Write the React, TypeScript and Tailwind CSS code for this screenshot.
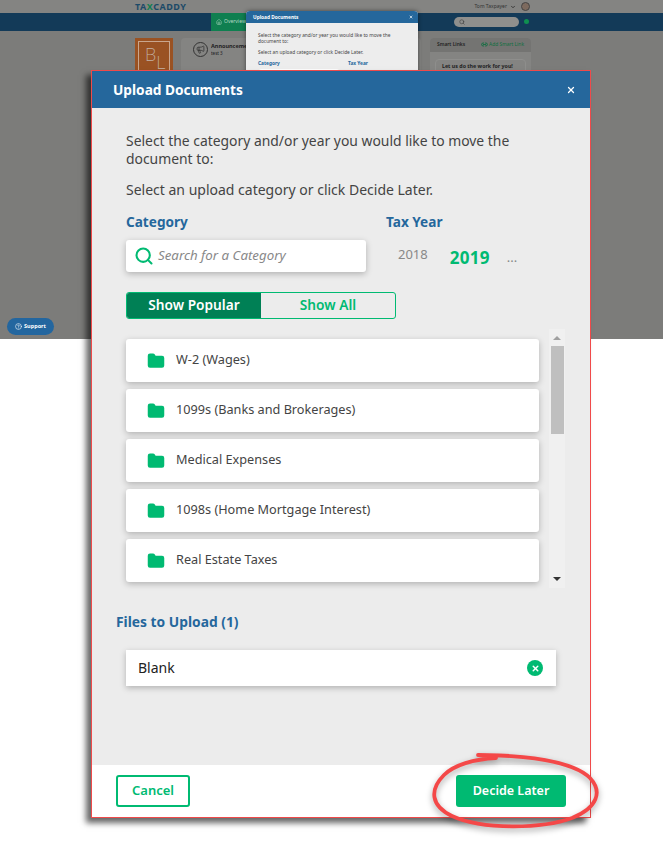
import { Search, Folder, X, Home, Megaphone, Link2, CircleHelp, ChevronDown } from "lucide-react"

const categories = [
  "W-2 (Wages)",
  "1099s (Banks and Brokerages)",
  "Medical Expenses",
  "1098s (Home Mortgage Interest)",
  "Real Estate Taxes",
]

const font = "font-['Noto_Sans','Open_Sans',sans-serif]"

function BackgroundApp() {
  return (
    <div className="relative h-[339px] w-full overflow-hidden bg-[#7c7c7a]">
      <div className="flex h-[13px] items-center justify-between bg-[#848482] pl-[135px] pr-[133px]">
        <span className="text-[9px] font-bold tracking-[0.5px] text-[#1c4a68]">
          TA<span className="text-[#0f7f50]">X</span>CADDY
        </span>
        <div className="flex items-center gap-[3px]">
          <span className="text-[5px] text-[#333]">Tom Taxpayer</span>
          <ChevronDown className="size-[6px] text-[#222]" strokeWidth={3} />
          <div className="ml-[2px] size-[9px] rounded-full border border-[#444] bg-[#7d6a5e]" />
        </div>
      </div>
      <div className="flex h-[18px] items-stretch bg-[#133a58] pl-[211px]">
        <div className="flex w-[35px] items-center gap-[2px] bg-[#0f7f50] pl-[5px] text-[5px] text-[#b5d8c5]">
          <Home className="size-[6px]" />
          Overview
        </div>
        <div className="ml-[208px] mt-1 flex h-[10px] w-[65px] items-center rounded-full bg-[#8f8f8d] pl-[5px]">
          <Search className="size-[6px] text-[#333]" />
        </div>
        <div className="ml-[5px] mt-[6px] size-[5px] rounded-full bg-[#0f8f50]" />
      </div>
      <div className="flex pl-[135px] pt-[7px]">
        <div className="h-[50px] w-[38px] shrink-0 bg-[#9a5223] p-[3px]">
          <div className="flex h-full border border-[#c9a68e] pl-[6px] pt-[3px] text-[18px] font-extralight leading-[18px] text-[#c4b2a6]">
            <span>B</span>
            <span className="mt-[8px]">L</span>
          </div>
        </div>
        <div className="ml-[8px] flex h-[60px] w-[240px] shrink-0 gap-[2px] rounded-sm bg-[#848482] pl-[12px] pt-[4px]">
          <div className="flex size-[15px] items-center justify-center rounded-full border border-[#333]">
            <Megaphone className="size-[9px] text-[#333]" />
          </div>
          <div className="ml-[1px] w-[36px] overflow-hidden whitespace-nowrap pt-[1px] text-[5.5px] font-bold leading-[7px] text-[#222]">
            Announcements
            <div className="text-[4.5px] font-normal">test 3</div>
          </div>
        </div>
        <div className="ml-[9px] h-[60px] w-[101px] shrink-0 rounded-sm bg-[#848482]">
          <div className="flex h-[14px] items-center justify-between rounded-t-sm bg-[#747472] pl-[7px] pr-[7px] text-[4.9px] text-[#222]">
            <span className="font-semibold">Smart Links</span>
            <span className="flex items-center gap-[1px] text-[#0f6f40]">
              <Link2 className="size-[7px]" strokeWidth={3} />
              Add Smart Link
            </span>
          </div>
          <div className="mx-[5px] mt-[7px] h-10 rounded-sm border border-[#8e8e8c] pl-[6px] pt-[3px] text-[5.3px] font-bold text-[#222]">
            Let us do the work for you!
          </div>
        </div>
      </div>
      <div className="absolute bottom-[4px] left-[7px] flex h-[17px] w-[47px] items-center justify-center gap-[2px] rounded-full bg-[#23669f] text-[5.5px] font-bold text-white">
        <CircleHelp className="size-[7px]" />
        Support
      </div>
      <div className="absolute left-[246px] top-[11px] h-[70px] w-[172px] overflow-hidden rounded-t-sm bg-[#ededed] text-[4.8px] leading-[6px] text-[#444] shadow-[0_0_4px_rgba(0,0,0,0.5)]">
        <div className="flex h-[12px] items-center justify-between bg-[#25679c] pl-[7px] pr-[5px] font-bold text-white">
          Upload Documents <X className="size-[4px]" strokeWidth={4} />
        </div>
        <div className="pl-[12px] pr-[20px] pt-[9px]">
          <p>Select the category and/or year you would like to move the document to:</p>
          <p className="mt-[5px]">Select an upload category or click Decide Later.</p>
          <div className="mt-[5px] flex font-bold text-[#25679c]">
            <span className="w-[90px]">Category</span>
            <span>Tax Year</span>
          </div>
          <div className="mt-[3px] h-[20px] w-[82px] rounded-sm bg-white" />
        </div>
      </div>
    </div>
  )
}

function CategoryRow({ name }: { name: string }) {
  return (
    <div className="flex h-[43px] shrink-0 items-center rounded-[3px] bg-white pl-[21px] shadow-[0_2px_6px_rgba(0,0,0,0.25)]">
      <Folder className="size-[18px] fill-[#00ba72] text-[#00ba72]" />
      <span className="-mt-[2px] ml-[11px] text-[12.7px] text-[#444]">{name}</span>
    </div>
  )
}

function UploadModal() {
  return (
    <div className="absolute left-[91px] top-[70px] flex h-[748px] w-[500px] flex-col border border-[#f04a4a] bg-[#ececec] shadow-[-5px_5px_6px_rgba(0,0,0,0.6)]">
      <div className="flex h-[37px] shrink-0 items-center justify-between bg-[#25679c] pl-[21px] pr-[14px] text-white">
        <h1 className="mt-[2px] text-[13.7px] font-bold">Upload Documents</h1>
        <X className="size-[10px]" strokeWidth={3} />
      </div>
      <div className="flex min-h-0 flex-1 flex-col pl-[34px]">
        <p className="mt-[24px] w-[400px] text-[13.9px] leading-[18px] text-[#444]">
          Select the category and/or year you would like to move the document to:
        </p>
        <p className="mt-[13px] text-[14px] leading-[18px] text-[#444]">
          Select an upload category or click Decide Later.
        </p>
        <div className="mt-[13px] flex">
          <div className="w-[260px]">
            <h2 className="text-[13.6px] font-bold leading-5 text-[#25679c]">Category</h2>
            <div className="mt-[8px] flex h-8 w-[240px] items-center rounded-[3px] bg-white pl-2 shadow-[0_2px_6px_rgba(0,0,0,0.25)]">
              <Search className="size-[20px] text-[#00ba72]" strokeWidth={2.5} />
              <span className="ml-[4px] text-[13.3px] italic text-[#888]">Search for a Category</span>
            </div>
          </div>
          <div>
            <h2 className="text-[13.6px] font-bold leading-5 text-[#25679c]">Tax Year</h2>
            <div className="mt-[8px] flex h-8 items-center pl-3">
              <span className="-mt-[3px] text-[13px] text-[#888]">2018</span>
              <span className="ml-[22px] mt-[3px] text-[17px] font-bold tracking-[0.3px] text-[#00ba72]">2019</span>
              <span className="ml-[17px] mt-[3px] text-[13px] text-[#888]">...</span>
            </div>
          </div>
        </div>
        <div className="mt-[20px] flex h-[27px] w-[270px] overflow-hidden rounded-[3px] border border-[#00ba72] text-[13.7px] font-semibold">
          <div className="flex w-[134px] items-center justify-center bg-[#008055] text-white">Show Popular</div>
          <div className="flex flex-1 items-center justify-center text-[#00ba72]">Show All</div>
        </div>
        <div className="mt-[20px] flex h-[249px] gap-[10px]">
          <div className="flex w-[413px] flex-col gap-[7px]">
            {categories.map((c) => (
              <CategoryRow key={c} name={c} />
            ))}
          </div>
          <div className="-mt-[10px] flex h-[259px] w-[16px] flex-col items-center bg-[#f0f0f0]">
            <div className="mt-[7px] h-0 w-0 border-x-[4px] border-b-[4px] border-x-transparent border-b-[#a0a0a0]" />
            <div className="mt-[6px] h-[88px] w-[13px] bg-[#bfbfbf]" />
            <div className="mb-[7px] mt-auto h-0 w-0 border-x-[4px] border-t-[4px] border-x-transparent border-t-[#333]" />
          </div>
        </div>
        <h2 className="-ml-[10px] mt-[24px] text-[13.8px] font-bold leading-5 text-[#25679c]">Files to Upload (1)</h2>
        <div className="mt-[18px] flex h-9 w-[430px] items-center justify-between bg-white pl-3 pr-[13px] shadow-[0_2px_6px_rgba(0,0,0,0.25)]">
          <span className="-mt-[2px] text-[14px] text-[#222]">Blank</span>
          <span className="flex size-4 items-center justify-center rounded-full bg-[#00ba72] text-white">
            <X className="size-[9px]" strokeWidth={4} />
          </span>
        </div>
      </div>
      <div className="flex h-[52px] shrink-0 items-center justify-between bg-white pl-6 pr-6">
        <button className="h-8 w-[74px] rounded-[3px] border-2 border-[#00ba72] text-[13px] font-semibold text-[#00ba72]">
          Cancel
        </button>
        <button className="h-8 w-[110px] rounded-[3px] bg-[#00ba72] text-[12.5px] font-semibold text-white">
          Decide Later
        </button>
      </div>
    </div>
  )
}

export default function App() {
  return (
    <div className={`relative h-[843px] w-[663px] overflow-hidden bg-white ${font}`}>
      <BackgroundApp />
      <UploadModal />
      <svg className="absolute left-[430px] top-[750px] drop-shadow-[0_3px_3px_rgba(0,0,0,0.35)]" width="172" height="82" viewBox="0 0 172 82" fill="none">
        <path
          d="M48 5C95 5 143 11 160 28C173 42 167 58 142 68C112 79 52 80 22 66C1 56 -1 40 14 25C24 15 44 9 66 8"
          stroke="#f44848"
          strokeWidth="3.8"
          strokeLinecap="round"
        />
      </svg>
    </div>
  )
}
